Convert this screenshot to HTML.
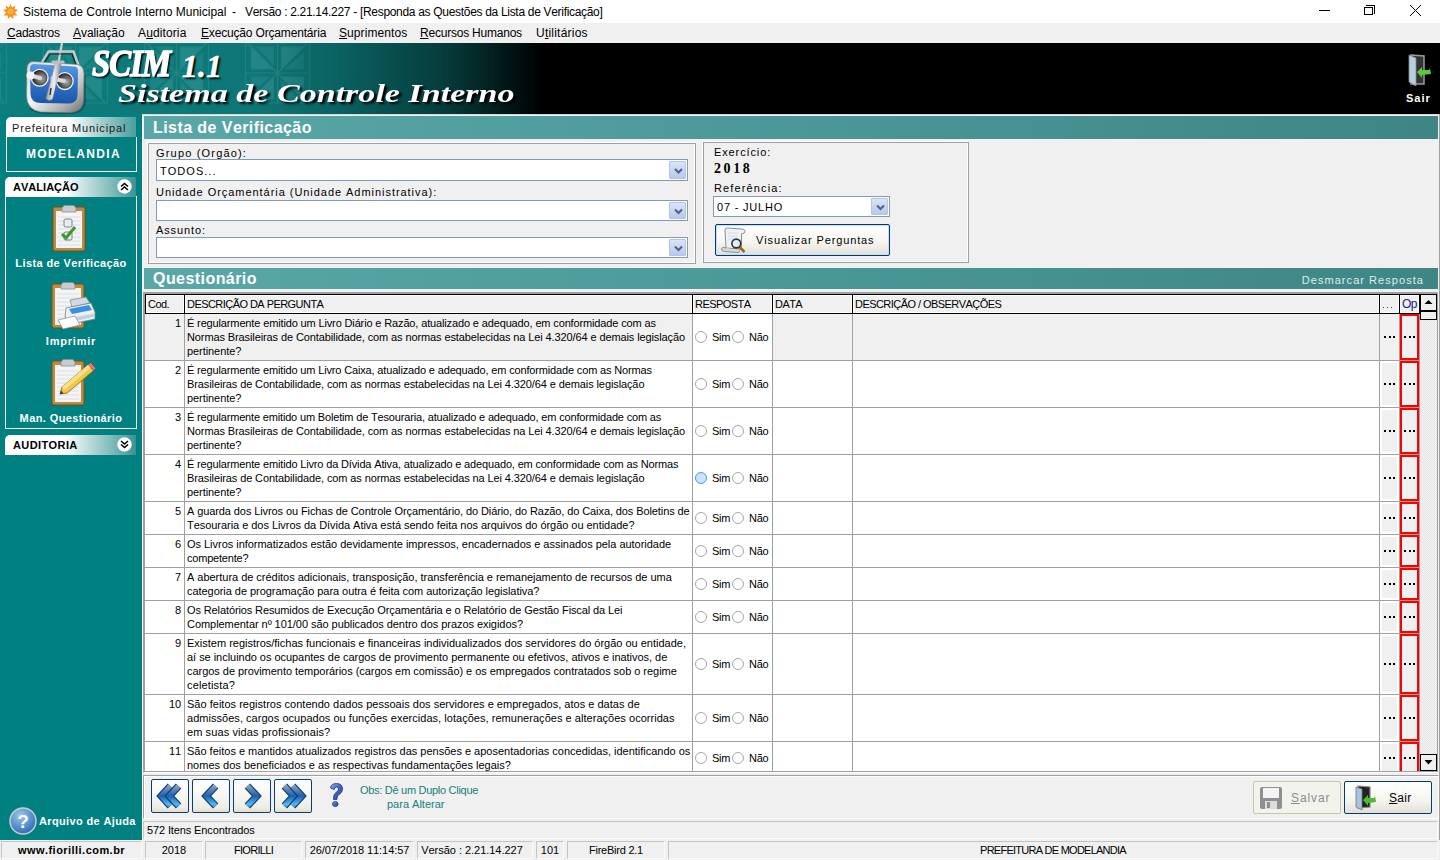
<!DOCTYPE html>
<html><head><meta charset="utf-8">
<style>
*{margin:0;padding:0;box-sizing:border-box}
html,body{width:1440px;height:860px;overflow:hidden;background:#f0f0f0;font-family:"Liberation Sans",sans-serif;color:#000;font-kerning:none}
.a{position:absolute}
#title{left:0;top:0;width:1440px;height:23px;background:#fff}
#menu{left:0;top:23px;width:1440px;height:20px;background:#f0f0f0;font-size:12px}
#banner{left:0;top:43px;width:1440px;height:71px;background:#000}
.bt{font-family:"Liberation Serif",serif;font-weight:bold;font-style:italic;color:#fff;white-space:nowrap;text-shadow:2px 2px 2px #000}
#side{left:0;top:114px;width:142px;height:726px;background:#008080}
#main{left:142px;top:114px;width:1298px;height:726px;background:#f0f0f0}
.hdr{background:linear-gradient(90deg,#5aa7a7 0%,#4a9898 50%,#3f8585 100%);color:#fff;font-weight:bold;font-size:16px}
.grid{font-size:11px}
.row{position:absolute;left:0;width:1293px;border-bottom:1px solid #a0a0a0;background:#fff}
.c{position:absolute;top:0;bottom:0;border-right:1px solid #a0a0a0}
.sb{position:absolute;top:841px;height:19px;border:1px solid #c8c8c8;border-right-color:#fff;border-bottom-color:#fff;font-size:12px;text-align:center;line-height:17px;background:#f0f0f0}
.mi{top:3px;font-size:12px;white-space:nowrap;letter-spacing:-0.22px}
.lbl{font-size:11px;font-weight:bold;color:#fff;text-align:center;white-space:nowrap;letter-spacing:0.3px}
.sbp{border:1px solid #c4c4c4;border-right-color:#fbfbfb;border-bottom-color:#fbfbfb;text-align:center;line-height:16px;background:#f0f0f0}
.gb{border:1px solid #a0a0a0;box-shadow:-1px -1px 0 #fff, inset -1px -1px 0 #fff}
.fl{font-size:11px;white-space:nowrap;letter-spacing:0.88px;color:#000}
.cb{background:#fff;border:1px solid #7f9db9;font-size:11px;letter-spacing:0.6px}
.dd{background:linear-gradient(#dbe5f8,#b8c8ec);border:1px solid #b2c4ea;border-radius:1px}
.btn{border:1px solid #003c74;border-radius:2px;box-shadow:inset 0 0 0 1px #c4dcf8;background:linear-gradient(#fff 0%,#f5f5f0 60%,#e0dfd5 100%)}
.hc{background:#f0f0f0;border:1px solid #fff;font-size:11px;line-height:16px;padding-left:1px;white-space:nowrap;overflow:hidden;letter-spacing:-0.55px}
.gt{font-size:11px;line-height:14px;white-space:nowrap;letter-spacing:-0.13px}
.sn{letter-spacing:-0.3px}
.rd{width:12px;height:12px;border-radius:50%;border:1px solid #a8a8a8;background:#fff}
.rdc{width:12px;height:12px;border-radius:50%;border:1px solid #3ca0f0;background:#cfe2fb}
.dots{width:11px;height:2px;background:repeating-linear-gradient(90deg,#000 0 2px,transparent 2px 4.5px)}
.sbb{border:1px solid #000;background:#f0f0f0}
.nb{border:1px solid #0a3c7a;border-radius:2px;background:linear-gradient(#fff 0%,#f8f8f4 40%,#efeee6 85%,#e2dccb 100%)}
.btn2{border:1px solid #cac4a6;border-radius:2px;background:#f3f3ee}
.tt{top:5px;font-size:12px;color:#000;white-space:pre}
</style></head><body>
<div id="title" class="a">
<svg class="a" style="left:3px;top:4px" width="15" height="15" viewBox="0 0 15 15"><g fill="#f7941d"><polygon points="7.5,0 9,3.5 12.5,1.5 11.5,5 15,6 12,8.5 14.5,11.5 10.5,11.5 10,15 7.5,12.5 5,15 4.5,11.5 0.5,11.5 3,8.5 0,6 3.5,5 2.5,1.5 6,3.5"/></g><circle cx="7.5" cy="7.5" r="3" fill="#fbb040"/></svg>
<div class="a tt" style="left:23px;letter-spacing:0px">Sistema de Controle Interno Municipal</div><div class="a tt" style="left:232px">-</div><div class="a tt" style="left:245px;letter-spacing:-0.31px">Versão : 2.21.14.227 - [Responda as Questões da Lista de Verificação]</div>
<div class="a" style="left:1319px;top:10px;width:11px;height:1px;background:#000"></div>
<div class="a" style="left:1366px;top:5px;width:9px;height:9px;border-top:1px solid #000;border-right:1px solid #000"></div>
<div class="a" style="left:1364px;top:7px;width:9px;height:8px;border:1px solid #000;background:#fff"></div>
<svg class="a" style="left:1409px;top:4px" width="13" height="13" viewBox="0 0 13 13"><path d="M1 1L12 12M12 1L1 12" stroke="#000" stroke-width="1"/></svg>
</div>
<div id="menu" class="a">
<span class="a mi" style="left:7px"><u>C</u>adastros</span>
<span class="a mi" style="left:73px;letter-spacing:-0.06px"><u>A</u>valiação</span>
<span class="a mi" style="left:138px;letter-spacing:0.12px">A<u>u</u>ditoria</span>
<span class="a mi" style="left:201px;letter-spacing:-0.17px"><u>E</u>xecução Orçamentária</span>
<span class="a mi" style="left:339px;letter-spacing:0.08px"><u>S</u>uprimentos</span>
<span class="a mi" style="left:420px"><u>R</u>ecursos Humanos</span>
<span class="a mi" style="left:536px;letter-spacing:0.22px">U<u>t</u>ilitários</span>
</div>
<div id="banner" class="a">
<svg class="a" style="left:0;top:0" width="560" height="71" viewBox="0 0 560 71">
<defs><linearGradient id="bg1" x1="0" x2="1" y1="0" y2="0"><stop offset="0" stop-color="#0d7d7d"/><stop offset="0.45" stop-color="#0e7676"/><stop offset="0.6" stop-color="#0b6262"/><stop offset="0.8" stop-color="#063a3a"/><stop offset="0.97" stop-color="#000"/></linearGradient>
<pattern id="pt" width="101" height="71" patternUnits="userSpaceOnUse" x="25" y="0">
<g transform="translate(50.5,30)" fill="#4aa5a5" stroke="#3d9c9c" stroke-width="1.2">
<g opacity="0.35">
<path d="M0 -30 L0 30 M-32 0 L32 0 M-30 -30 L30 30 M30 -30 L-30 30" fill="none"/>
<path d="M-32 -30 L32 -30 L32 30 L-32 30 Z" fill="none"/>
<path d="M4 -26 L26 -26 L4 -4 Z"/><path d="M26 4 L26 26 L4 4 Z"/><path d="M-4 26 L-26 26 L-4 4 Z"/><path d="M-26 -4 L-26 -26 L-4 -4 Z"/>
<path d="M-4 -26 L-4 -8 L-20 -26 Z" opacity="0.7"/><path d="M26 -4 L8 -4 L26 -20 Z" opacity="0.7"/><path d="M4 26 L4 8 L20 26 Z" opacity="0.7"/><path d="M-26 4 L-8 4 L-26 20 Z" opacity="0.7"/>
</g></g></pattern>
<linearGradient id="fade" x1="0" x2="1"><stop offset="0" stop-color="#fff"/><stop offset="0.5" stop-color="#fff"/><stop offset="0.64" stop-color="#000"/></linearGradient>
<mask id="mk"><rect width="560" height="71" fill="url(#fade)"/></mask>
</defs>
<rect width="560" height="71" fill="url(#bg1)"/>
<rect width="560" height="71" fill="url(#pt)" mask="url(#mk)"/>
</svg>
<!-- logo -->
<svg class="a" style="left:0;top:0" width="100" height="71" viewBox="0 0 100 71">
<defs>
<linearGradient id="lgb" x1="0" y1="0" x2="0" y2="1"><stop offset="0" stop-color="#5a9ae6"/><stop offset="0.5" stop-color="#2f72c8"/><stop offset="1" stop-color="#1b56a6"/></linearGradient>
<linearGradient id="lgf" x1="0" y1="0" x2="1" y2="1"><stop offset="0" stop-color="#d8d8d8"/><stop offset="0.45" stop-color="#f4f4f4"/><stop offset="0.8" stop-color="#a8a8a8"/><stop offset="1" stop-color="#6a6a6a"/></linearGradient>
<radialGradient id="lgj" cx="0.6" cy="0.55" r="0.55"><stop offset="0" stop-color="#b0b0b0"/><stop offset="0.5" stop-color="#6a6a6a"/><stop offset="1" stop-color="#202020"/></radialGradient>
<linearGradient id="lgs" x1="0" y1="0" x2="1" y2="0"><stop offset="0" stop-color="#9a9a9a"/><stop offset="0.5" stop-color="#f0f0f0"/><stop offset="1" stop-color="#8a8a8a"/></linearGradient>
</defs>
<path d="M62 0 L58.5 19" stroke="#d0d0d0" stroke-width="2.2"/>
<path d="M41.5 20 L48.5 8.5 L73.5 8.5 L78.5 22" fill="none" stroke="#c8c8c8" stroke-width="2.4"/>
<path d="M44 20 L50 11 L72 11 L76 22" fill="none" stroke="#1a1a1a" stroke-width="1.2" opacity="0.8"/>
<path d="M29 66 Q36 71 48 71 L72 71 Q85 70 86 58 L86 32 Z" fill="#000" opacity="0.25"/>
<path d="M33 18.5 Q27.5 19 27 25 L26.5 52 Q26.5 67 41 69 L70 69.5 Q83 69 83.5 57 L84 31 Q84 22.5 77 21.5 Z" fill="url(#lgf)" stroke="#7a7a7a" stroke-width="0.6"/>
<path d="M34 21 L75 23.5 Q78 24 78 28 L77.5 52 Q77 60.5 69 60.5 L41 60 Q31 60 30.5 51 L30 25.5 Q30 21 34 21 Z" fill="url(#lgb)"/>
<circle cx="39.7" cy="34.8" r="8.4" fill="url(#lgj)" stroke="#f2f2f2" stroke-width="1.3"/>
<circle cx="64.8" cy="38.1" r="8.4" fill="url(#lgj)" stroke="#f2f2f2" stroke-width="1.3"/>
<path d="M31 32.5 L40 35" stroke="#d8d8d8" stroke-width="4" stroke-linecap="round"/>
<path d="M55 36 L64 38" stroke="#d8d8d8" stroke-width="4" stroke-linecap="round"/>
<circle cx="30.5" cy="32.5" r="4" fill="#f4f4f4"/>
<circle cx="54.5" cy="36" r="4" fill="#f4f4f4"/>
<path d="M55.5 19.5 L61.5 19.5 L52.5 56 Q49 59 46 55.5 Z" fill="url(#lgs)" stroke="#888" stroke-width="0.5"/>
<rect x="51.5" y="17.5" width="13" height="3" rx="1" fill="#bdbdbd"/>
<path d="M51 45 L50 52" stroke="#333" stroke-width="1.5"/>
</svg>
<div class="a bt" style="left:92px;top:-2px;font-size:38px;letter-spacing:-1px;transform:scaleX(0.86);-webkit-text-stroke:1.4px #fff;transform-origin:0 0">SCIM</div>
<div class="a bt" style="left:182px;top:6px;font-size:31px;letter-spacing:0.5px;-webkit-text-stroke:0.6px #fff">1.1</div>
<div class="a bt" style="left:118px;top:36px;font-size:26px;letter-spacing:0px;transform-origin:0 0;transform:scaleX(1.31)" id="sist">Sistema de Controle Interno</div>
<svg class="a" style="left:1407px;top:11px" width="25" height="32" viewBox="0 0 25 32">
<path d="M4 1 L17 2 L17 30 L4 30Z" fill="#333" stroke="#999" stroke-width="1.5"/>
<path d="M2 1 L9 4 L9 32 L2 28Z" fill="#b8cde0" stroke="#888" stroke-width="0.8"/>
<path d="M10 18 L15 13 L15 16 L22 16 L23 14 L24 20 L15 21 L15 24Z" fill="#5cc83c"/>
</svg>
<div class="a" style="left:1406px;top:49px;font-size:11px;font-weight:bold;color:#fff;letter-spacing:1px">Sair</div>
</div>
<div id="side" class="a">
<div class="a" style="left:6px;top:3px;width:130px;height:20px;border-radius:5px 0 0 0;background:linear-gradient(90deg,#fff 0%,#fff 48%,#9fcaca 75%,#4a9e9e 100%)"></div>
<div class="a" style="left:12px;top:8px;font-size:11px;color:#1a1a1a;white-space:nowrap;letter-spacing:0.85px">Prefeitura Municipal</div>
<div class="a" style="left:6px;top:23px;width:131px;height:35px;border:1px solid #fff;border-top:none"></div>
<div class="a" style="left:8px;top:33px;width:131px;text-align:center;font-size:12px;font-weight:bold;color:#fff;letter-spacing:1.38px">MODELANDIA</div>
<div class="a" style="left:5px;top:63px;width:131px;height:20px;border-radius:5px 0 0 0;background:linear-gradient(90deg,#fff 0%,#fff 45%,#a8d0d0 70%,#5aa6a6 92%,#3a9090 100%)"></div>
<div class="a" style="left:13px;top:67px;font-size:11px;font-weight:bold;color:#000;letter-spacing:0.03px">AVALIAÇÃO</div>
<svg class="a" style="left:117px;top:65px" width="15" height="15" viewBox="0 0 15 15"><circle cx="7.5" cy="7.5" r="7.2" fill="#fff"/><path d="M4 7.5 L7.5 4.5 L11 7.5 M4 11 L7.5 8 L11 11" fill="none" stroke="#000" stroke-width="1.6"/></svg>
<div class="a" style="left:5px;top:82px;width:132px;height:233px;border:1px solid #fff;border-top:none"></div>
<svg class="a" style="left:50px;top:91px" width="38" height="48" viewBox="0 0 36 48"><path d="M2 4 Q2 2 4 2 L32 2 Q34 2 34 4 L34 44 Q34 46 32 46 L4 46 Q2 46 2 44Z" fill="#c08a40" stroke="#6e5020" stroke-width="1"/>
<rect x="5" y="6" width="26" height="37" fill="#f4f4f4"/>
<g stroke="#d6dbe6" stroke-width="0.8"><path d="M7 12H29M7 16H29M7 20H29M7 24H29M7 28H29M7 32H29M7 36H29M7 40H29"/></g>
<path d="M11 3 L13 0.5 L23 0.5 L25 3 L25 7 L11 7Z" fill="#c9cbcf" stroke="#8d9096" stroke-width="0.8"/>
<rect x="13" y="14" width="8" height="8" rx="1.5" fill="#e8ecf2" stroke="#666" stroke-width="0.8"/>
<rect x="13" y="27" width="8" height="8" rx="1.5" fill="#e8ecf2" stroke="#666" stroke-width="0.8"/>
<path d="M11 29 L15 33 L24 22" fill="none" stroke="#3a9a2a" stroke-width="3"/>
</svg>
<div class="a lbl" style="left:0;top:143px;width:142px;letter-spacing:0.4px">Lista de Verificação</div>
<svg class="a" style="left:50px;top:168px" width="46" height="50" viewBox="0 0 46 50"><path d="M2 4 Q2 2 4 2 L32 2 Q34 2 34 4 L34 44 Q34 46 32 46 L4 46 Q2 46 2 44Z" fill="#c08a40" stroke="#6e5020" stroke-width="1"/>
<rect x="5" y="6" width="26" height="37" fill="#f4f4f4"/>
<g stroke="#d6dbe6" stroke-width="0.8"><path d="M7 12H29M7 16H29M7 20H29M7 24H29M7 28H29M7 32H29M7 36H29M7 40H29"/></g>
<path d="M11 3 L13 0.5 L23 0.5 L25 3 L25 7 L11 7Z" fill="#c9cbcf" stroke="#8d9096" stroke-width="0.8"/>
<path d="M20 18 L36 15 L40 21 L22 25 Z" fill="#d4dae2" stroke="#7a828c" stroke-width="0.7"/>
<path d="M16 26 L41 21 L45 30 L45 37 L21 42 L15 35 Z" fill="#eef1f4" stroke="#7a828c" stroke-width="0.8"/>
<path d="M19 27 L39 23 L42 28 L22 32 Z" fill="#3b8fe0"/>
<path d="M21 36 L44 31.5 L44 35 L21 40 Z" fill="#c9d0d8"/>
<path d="M8 38 L25 34 L30 43 L13 47 Z" fill="#fff" stroke="#8a8a8a" stroke-width="0.7"/>
</svg>
<div class="a lbl" style="left:0;top:221px;width:142px;letter-spacing:0.8px">Imprimir</div>
<svg class="a" style="left:50px;top:245px" width="46" height="48" viewBox="0 0 46 48"><path d="M2 4 Q2 2 4 2 L32 2 Q34 2 34 4 L34 44 Q34 46 32 46 L4 46 Q2 46 2 44Z" fill="#c08a40" stroke="#6e5020" stroke-width="1"/>
<rect x="5" y="6" width="26" height="37" fill="#f4f4f4"/>
<g stroke="#d6dbe6" stroke-width="0.8"><path d="M7 12H29M7 16H29M7 20H29M7 24H29M7 28H29M7 32H29M7 36H29M7 40H29"/></g>
<path d="M11 3 L13 0.5 L23 0.5 L25 3 L25 7 L11 7Z" fill="#c9cbcf" stroke="#8d9096" stroke-width="0.8"/>
<path d="M10 35 L12 28.1 L38.4 5.5 L43.6 11.5 L17.2 34.1 Z" fill="#f2c744" stroke="#7a6418" stroke-width="0.8"/>
<path d="M12 28.1 L38.4 5.5 L41 8.5 L14.6 31.1 Z" fill="#f8e08a"/>
<path d="M38.4 5.5 L40.7 3.5 L45.9 9.5 L43.6 11.5 Z" fill="#e87a7a" stroke="#8a3a3a" stroke-width="0.6"/>
<path d="M10 35 L11 31.5 L13.6 34.5 Z" fill="#333"/>
</svg>
<div class="a lbl" style="left:0;top:298px;width:142px;letter-spacing:0.4px">Man. Questionário</div>
<div class="a" style="left:5px;top:321px;width:131px;height:20px;border-radius:5px 0 0 0;background:linear-gradient(90deg,#fff 0%,#fff 45%,#a8d0d0 70%,#5aa6a6 92%,#3a9090 100%)"></div>
<div class="a" style="left:13px;top:325px;font-size:11px;font-weight:bold;color:#000;letter-spacing:0.4px">AUDITORIA</div>
<svg class="a" style="left:117px;top:323px" width="15" height="15" viewBox="0 0 15 15"><circle cx="7.5" cy="7.5" r="7.2" fill="#fff"/><path d="M4 4 L7.5 7 L11 4 M4 7.5 L7.5 10.5 L11 7.5" fill="none" stroke="#000" stroke-width="1.6"/></svg>
<svg class="a" style="left:9px;top:693px" width="28" height="28" viewBox="0 0 28 28"><defs><radialGradient id="hg" cx="0.4" cy="0.3" r="0.8"><stop offset="0" stop-color="#9cc8f0"/><stop offset="1" stop-color="#1f5fb0"/></radialGradient></defs><circle cx="14" cy="14" r="13" fill="url(#hg)" stroke="#ccc" stroke-width="1.5"/><text x="14" y="21" text-anchor="middle" font-family="Liberation Sans" font-weight="bold" font-size="19" fill="#fff">?</text></svg>
<div class="a" style="left:39px;top:701px;font-size:11px;font-weight:bold;color:#fff;white-space:nowrap;letter-spacing:0.36px">Arquivo de Ajuda</div>
</div>
<div class="a" style="left:0;top:840px;width:142px;height:20px;background:#f0f0f0"></div>
<div class="a sbp" style="left:1px;top:841px;width:141px;height:18px;font-weight:bold;font-size:11px;letter-spacing:0.46px">www.fiorilli.com.br</div>

<div id="main" class="a">
<div class="a" style="left:0;top:0;width:1297px;height:726px;border-top:1px solid #d8d8d8;border-left:1px solid #fff"></div>
<div class="a hdr" style="left:2px;top:2px;width:1294px;height:23px"><span class="a" style="left:9px;top:3px;letter-spacing:0.43px">Lista de Verificação</span></div>
<div class="a gb" style="left:6px;top:29px;width:548px;height:121px"></div>
<div class="a fl" style="left:14px;top:33px;letter-spacing:1.18px">Grupo (Orgão):</div>
<div class="a cb" style="left:14px;top:45px;width:532px;height:22px"><span class="a" style="left:3px;top:5px;letter-spacing:1.03px">TODOS...</span><div class="a dd" style="right:1px;top:1px;width:17px;height:18px"><svg width="17" height="18" viewBox="0 0 17 18"><path d="M5 7.0 L8.5 10.5 L12 7.0" fill="none" stroke="#4d6185" stroke-width="2"/></svg></div></div>
<div class="a fl" style="left:14px;top:72px;letter-spacing:0.955px">Unidade Orçamentária (Unidade Administrativa):</div>
<div class="a cb" style="left:14px;top:86px;width:532px;height:21px"><span class="a" style="left:3px;top:3px"></span><div class="a dd" style="right:1px;top:1px;width:17px;height:17px"><svg width="17" height="17" viewBox="0 0 17 17"><path d="M5 6.5 L8.5 10.0 L12 6.5" fill="none" stroke="#4d6185" stroke-width="2"/></svg></div></div>
<div class="a fl" style="left:14px;top:110px">Assunto:</div>
<div class="a cb" style="left:14px;top:123px;width:532px;height:21px"><span class="a" style="left:3px;top:3px"></span><div class="a dd" style="right:1px;top:1px;width:17px;height:17px"><svg width="17" height="17" viewBox="0 0 17 17"><path d="M5 6.5 L8.5 10.0 L12 6.5" fill="none" stroke="#4d6185" stroke-width="2"/></svg></div></div>
<div class="a gb" style="left:561px;top:28px;width:266px;height:121px"></div>
<div class="a fl" style="left:572px;top:32px">Exercício:</div>
<div class="a" style="left:572px;top:47px;font-size:14px;font-weight:bold;font-family:'Liberation Serif',serif;letter-spacing:2.6px">2018</div>
<div class="a fl" style="left:572px;top:68px;letter-spacing:1.14px">Referência:</div>
<div class="a cb" style="left:571px;top:82px;width:177px;height:21px"><span class="a" style="left:3px;top:4px;letter-spacing:0.8px">07 - JULHO</span><div class="a dd" style="right:1px;top:1px;width:17px;height:17px"><svg width="17" height="17" viewBox="0 0 17 17"><path d="M5 6.5 L8.5 10.0 L12 6.5" fill="none" stroke="#4d6185" stroke-width="2"/></svg></div></div>
<div class="a btn" style="left:573px;top:110px;width:175px;height:32px"></div>
<svg class="a" style="left:578px;top:113px" width="27" height="27" viewBox="0 0 27 27">
<path d="M5 3 Q5 1 7.5 1 L22 2 Q25 2.3 25 4.5 Q25 6.5 22.5 6.5 L21.5 6.5 L21.5 20 Q21.5 22 19 22 L6 21 Z" fill="#edf2f7" stroke="#8e8e8e" stroke-width="1"/>
<path d="M6 21 Q2 19.5 1.5 21.5 Q1 24 5 24.5 L18 25.5 Q20 25.5 19.5 23.5" fill="#d8d8d8" stroke="#8e8e8e" stroke-width="1"/>
<g stroke="#c9d4e0" stroke-width="0.7"><path d="M8 6H18M8 9H18M8 12H14"/></g>
<path d="M19.5 20 L24.5 25" stroke="#9a6a10" stroke-width="2.6"/>
<circle cx="16.3" cy="16.5" r="4.4" fill="#e2ecf6" stroke="#333" stroke-width="1.6"/>
</svg>
<div class="a fl" style="left:614px;top:120px">Visualizar Perguntas</div>
<div class="a hdr" style="left:2px;top:154px;width:1294px;height:21px"><span class="a" style="left:9px;top:2px;letter-spacing:0.44px">Questionário</span><span class="a" style="right:14px;top:6px;font-size:11px;font-weight:normal;color:#dceeee;letter-spacing:1.05px">Desmarcar Resposta</span></div>
</div>
<!--GRID-->
<div class="a" style="left:143px;top:292px;width:1295px;height:481px;border:1px solid #a0a0a0;border-right-color:#fff;border-bottom-color:#fff;background:#fff"></div>
<div class="a" style="left:144px;top:293px;width:1294px;height:479px;border-top:1px solid #a0a0a0;border-left:1px solid #a0a0a0;border-right:1px solid #a0a0a0;border-bottom:1px solid #a0a0a0"></div>
<div class="a" style="left:145px;top:294px;width:1292px;height:477px;overflow:hidden" id="gridin">
<div class="a" style="left:0;top:0;width:1275px;height:20px;background:#000"></div>
<div class="a hc" style="left:1px;top:1px;width:38px;height:18px;">Cod.</div>
<div class="a hc" style="left:40px;top:1px;width:507px;height:18px;">DESCRIÇÃO DA PERGUNTA</div>
<div class="a hc" style="left:548px;top:1px;width:79px;height:18px;">RESPOSTA</div>
<div class="a hc" style="left:628px;top:1px;width:79px;height:18px;">DATA</div>
<div class="a hc" style="left:708px;top:1px;width:526px;height:18px;">DESCRIÇÃO / OBSERVAÇÕES</div>
<div class="a hc" style="left:1235px;top:1px;width:19px;height:18px;"></div>
<div class="a hc" style="left:1255px;top:1px;width:19px;height:18px;color:#1a237e;font-size:12px;">Op</div>
<div class="a" style="left:1238px;top:13px;width:9px;height:1px;background:repeating-linear-gradient(90deg,#55308a 0 1px,transparent 1px 4px)"></div>
<div class="a" style="left:0;top:20px;width:1275px;height:47px;background:#a0a0a0"></div>
<div class="a" style="left:0px;top:20px;width:39px;height:46px;background:#f0f0f0"></div>
<div class="a" style="left:40px;top:20px;width:507px;height:46px;background:#f0f0f0"></div>
<div class="a" style="left:548px;top:20px;width:79px;height:46px;background:#fff"></div>
<div class="a" style="left:628px;top:20px;width:79px;height:46px;background:#f0f0f0"></div>
<div class="a" style="left:708px;top:20px;width:526px;height:46px;background:#f0f0f0"></div>
<div class="a" style="left:1235px;top:20px;width:19px;height:46px;background:#f0f0f0"></div>
<div class="a" style="left:1255px;top:20px;width:19px;height:46px;background:#f0f0f0"></div>
<div class="a gt" style="left:1px;top:22px;width:35px;text-align:right">1</div>
<div class="a gt" style="left:42px;top:22px;letter-spacing:-0.140px">É regularmente emitido um Livro Diário e Razão, atualizado e adequado, em conformidade com as</div>
<div class="a gt" style="left:42px;top:36px;letter-spacing:-0.107px">Normas Brasileiras de Contabilidade, com as normas estabelecidas na Lei 4.320/64 e demais legislação</div>
<div class="a gt" style="left:42px;top:50px;letter-spacing:-0.070px">pertinente?</div>
<div class="a rd" style="left:550px;top:37.0px"></div>
<div class="a gt sn" style="left:567px;top:36px">Sim</div>
<div class="a rd" style="left:587px;top:37.0px"></div>
<div class="a gt sn" style="left:604px;top:36px">Não</div>
<div class="a" style="left:1235px;top:20px;width:19px;height:46px;background:#f0f0f0"></div>
<div class="a dots" style="left:1239px;top:42px"></div>
<div class="a" style="left:1255px;top:20px;width:19px;height:46px;background:#f0f0f0;border:2px solid #f00"></div>
<div class="a dots" style="left:1259px;top:42px"></div>
<div class="a" style="left:0;top:67px;width:1275px;height:47px;background:#a0a0a0"></div>
<div class="a" style="left:0px;top:67px;width:39px;height:46px;background:#fff"></div>
<div class="a" style="left:40px;top:67px;width:507px;height:46px;background:#fff"></div>
<div class="a" style="left:548px;top:67px;width:79px;height:46px;background:#fff"></div>
<div class="a" style="left:628px;top:67px;width:79px;height:46px;background:#fff"></div>
<div class="a" style="left:708px;top:67px;width:526px;height:46px;background:#fff"></div>
<div class="a" style="left:1235px;top:67px;width:19px;height:46px;background:#fff"></div>
<div class="a" style="left:1255px;top:67px;width:19px;height:46px;background:#fff"></div>
<div class="a gt" style="left:1px;top:69px;width:35px;text-align:right">2</div>
<div class="a gt" style="left:42px;top:69px;letter-spacing:-0.152px">É regularmente emitido um Livro Caixa, atualizado e adequado, em conformidade com as Normas</div>
<div class="a gt" style="left:42px;top:83px;letter-spacing:-0.105px">Brasileiras de Contabilidade, com as normas estabelecidas na Lei 4.320/64 e demais legislação</div>
<div class="a gt" style="left:42px;top:97px;letter-spacing:-0.070px">pertinente?</div>
<div class="a rd" style="left:550px;top:84.0px"></div>
<div class="a gt sn" style="left:567px;top:83px">Sim</div>
<div class="a rd" style="left:587px;top:84.0px"></div>
<div class="a gt sn" style="left:604px;top:83px">Não</div>
<div class="a" style="left:1237px;top:69px;width:15px;height:42px;background:#f0f0f0"></div>
<div class="a dots" style="left:1239px;top:89px"></div>
<div class="a" style="left:1255px;top:67px;width:19px;height:46px;background:#f0f0f0;border:2px solid #f00"></div>
<div class="a dots" style="left:1259px;top:89px"></div>
<div class="a" style="left:0;top:114px;width:1275px;height:47px;background:#a0a0a0"></div>
<div class="a" style="left:0px;top:114px;width:39px;height:46px;background:#fff"></div>
<div class="a" style="left:40px;top:114px;width:507px;height:46px;background:#fff"></div>
<div class="a" style="left:548px;top:114px;width:79px;height:46px;background:#fff"></div>
<div class="a" style="left:628px;top:114px;width:79px;height:46px;background:#fff"></div>
<div class="a" style="left:708px;top:114px;width:526px;height:46px;background:#fff"></div>
<div class="a" style="left:1235px;top:114px;width:19px;height:46px;background:#fff"></div>
<div class="a" style="left:1255px;top:114px;width:19px;height:46px;background:#fff"></div>
<div class="a gt" style="left:1px;top:116px;width:35px;text-align:right">3</div>
<div class="a gt" style="left:42px;top:116px;letter-spacing:-0.166px">É regularmente emitido um Boletim de Tesouraria, atualizado e adequado, em conformidade com as</div>
<div class="a gt" style="left:42px;top:130px;letter-spacing:-0.107px">Normas Brasileiras de Contabilidade, com as normas estabelecidas na Lei 4.320/64 e demais legislação</div>
<div class="a gt" style="left:42px;top:144px;letter-spacing:-0.070px">pertinente?</div>
<div class="a rd" style="left:550px;top:131.0px"></div>
<div class="a gt sn" style="left:567px;top:130px">Sim</div>
<div class="a rd" style="left:587px;top:131.0px"></div>
<div class="a gt sn" style="left:604px;top:130px">Não</div>
<div class="a" style="left:1237px;top:116px;width:15px;height:42px;background:#f0f0f0"></div>
<div class="a dots" style="left:1239px;top:136px"></div>
<div class="a" style="left:1255px;top:114px;width:19px;height:46px;background:#f0f0f0;border:2px solid #f00"></div>
<div class="a dots" style="left:1259px;top:136px"></div>
<div class="a" style="left:0;top:161px;width:1275px;height:47px;background:#a0a0a0"></div>
<div class="a" style="left:0px;top:161px;width:39px;height:46px;background:#fff"></div>
<div class="a" style="left:40px;top:161px;width:507px;height:46px;background:#fff"></div>
<div class="a" style="left:548px;top:161px;width:79px;height:46px;background:#fff"></div>
<div class="a" style="left:628px;top:161px;width:79px;height:46px;background:#fff"></div>
<div class="a" style="left:708px;top:161px;width:526px;height:46px;background:#fff"></div>
<div class="a" style="left:1235px;top:161px;width:19px;height:46px;background:#fff"></div>
<div class="a" style="left:1255px;top:161px;width:19px;height:46px;background:#fff"></div>
<div class="a gt" style="left:1px;top:163px;width:35px;text-align:right">4</div>
<div class="a gt" style="left:42px;top:163px;letter-spacing:-0.153px">É regularmente emitido Livro da Dívida Ativa, atualizado e adequado, em conformidade com as Normas</div>
<div class="a gt" style="left:42px;top:177px;letter-spacing:-0.105px">Brasileiras de Contabilidade, com as normas estabelecidas na Lei 4.320/64 e demais legislação</div>
<div class="a gt" style="left:42px;top:191px;letter-spacing:-0.070px">pertinente?</div>
<div class="a rdc" style="left:550px;top:178.0px"></div>
<div class="a gt sn" style="left:567px;top:177px">Sim</div>
<div class="a rd" style="left:587px;top:178.0px"></div>
<div class="a gt sn" style="left:604px;top:177px">Não</div>
<div class="a" style="left:1237px;top:163px;width:15px;height:42px;background:#f0f0f0"></div>
<div class="a dots" style="left:1239px;top:183px"></div>
<div class="a" style="left:1255px;top:161px;width:19px;height:46px;background:#f0f0f0;border:2px solid #f00"></div>
<div class="a dots" style="left:1259px;top:183px"></div>
<div class="a" style="left:0;top:208px;width:1275px;height:33px;background:#a0a0a0"></div>
<div class="a" style="left:0px;top:208px;width:39px;height:32px;background:#fff"></div>
<div class="a" style="left:40px;top:208px;width:507px;height:32px;background:#fff"></div>
<div class="a" style="left:548px;top:208px;width:79px;height:32px;background:#fff"></div>
<div class="a" style="left:628px;top:208px;width:79px;height:32px;background:#fff"></div>
<div class="a" style="left:708px;top:208px;width:526px;height:32px;background:#fff"></div>
<div class="a" style="left:1235px;top:208px;width:19px;height:32px;background:#fff"></div>
<div class="a" style="left:1255px;top:208px;width:19px;height:32px;background:#fff"></div>
<div class="a gt" style="left:1px;top:210px;width:35px;text-align:right">5</div>
<div class="a gt" style="left:42px;top:210px;letter-spacing:-0.096px">A guarda dos Livros ou Fichas de Controle Orçamentário, do Diário, do Razão, do Caixa, dos Boletins de</div>
<div class="a gt" style="left:42px;top:224px;letter-spacing:-0.042px">Tesouraria e dos Livros da Dívida Ativa está sendo feita nos arquivos do órgão ou entidade?</div>
<div class="a rd" style="left:550px;top:218.0px"></div>
<div class="a gt sn" style="left:567px;top:217px">Sim</div>
<div class="a rd" style="left:587px;top:218.0px"></div>
<div class="a gt sn" style="left:604px;top:217px">Não</div>
<div class="a" style="left:1237px;top:210px;width:15px;height:28px;background:#f0f0f0"></div>
<div class="a dots" style="left:1239px;top:223px"></div>
<div class="a" style="left:1255px;top:208px;width:19px;height:32px;background:#f0f0f0;border:2px solid #f00"></div>
<div class="a dots" style="left:1259px;top:223px"></div>
<div class="a" style="left:0;top:241px;width:1275px;height:33px;background:#a0a0a0"></div>
<div class="a" style="left:0px;top:241px;width:39px;height:32px;background:#fff"></div>
<div class="a" style="left:40px;top:241px;width:507px;height:32px;background:#fff"></div>
<div class="a" style="left:548px;top:241px;width:79px;height:32px;background:#fff"></div>
<div class="a" style="left:628px;top:241px;width:79px;height:32px;background:#fff"></div>
<div class="a" style="left:708px;top:241px;width:526px;height:32px;background:#fff"></div>
<div class="a" style="left:1235px;top:241px;width:19px;height:32px;background:#fff"></div>
<div class="a" style="left:1255px;top:241px;width:19px;height:32px;background:#fff"></div>
<div class="a gt" style="left:1px;top:243px;width:35px;text-align:right">6</div>
<div class="a gt" style="left:42px;top:243px;letter-spacing:-0.028px">Os Livros informatizados estão devidamente impressos, encadernados e assinados pela autoridade</div>
<div class="a gt" style="left:42px;top:257px;letter-spacing:-0.200px">competente?</div>
<div class="a rd" style="left:550px;top:251.0px"></div>
<div class="a gt sn" style="left:567px;top:250px">Sim</div>
<div class="a rd" style="left:587px;top:251.0px"></div>
<div class="a gt sn" style="left:604px;top:250px">Não</div>
<div class="a" style="left:1237px;top:243px;width:15px;height:28px;background:#f0f0f0"></div>
<div class="a dots" style="left:1239px;top:256px"></div>
<div class="a" style="left:1255px;top:241px;width:19px;height:32px;background:#f0f0f0;border:2px solid #f00"></div>
<div class="a dots" style="left:1259px;top:256px"></div>
<div class="a" style="left:0;top:274px;width:1275px;height:33px;background:#a0a0a0"></div>
<div class="a" style="left:0px;top:274px;width:39px;height:32px;background:#fff"></div>
<div class="a" style="left:40px;top:274px;width:507px;height:32px;background:#fff"></div>
<div class="a" style="left:548px;top:274px;width:79px;height:32px;background:#fff"></div>
<div class="a" style="left:628px;top:274px;width:79px;height:32px;background:#fff"></div>
<div class="a" style="left:708px;top:274px;width:526px;height:32px;background:#fff"></div>
<div class="a" style="left:1235px;top:274px;width:19px;height:32px;background:#fff"></div>
<div class="a" style="left:1255px;top:274px;width:19px;height:32px;background:#fff"></div>
<div class="a gt" style="left:1px;top:276px;width:35px;text-align:right">7</div>
<div class="a gt" style="left:42px;top:276px;letter-spacing:-0.026px">A abertura de créditos adicionais, transposição, transferência e remanejamento de recursos de uma</div>
<div class="a gt" style="left:42px;top:290px;letter-spacing:-0.048px">categoria de programação para outra é feita com autorização legislativa?</div>
<div class="a rd" style="left:550px;top:284.0px"></div>
<div class="a gt sn" style="left:567px;top:283px">Sim</div>
<div class="a rd" style="left:587px;top:284.0px"></div>
<div class="a gt sn" style="left:604px;top:283px">Não</div>
<div class="a" style="left:1237px;top:276px;width:15px;height:28px;background:#f0f0f0"></div>
<div class="a dots" style="left:1239px;top:289px"></div>
<div class="a" style="left:1255px;top:274px;width:19px;height:32px;background:#f0f0f0;border:2px solid #f00"></div>
<div class="a dots" style="left:1259px;top:289px"></div>
<div class="a" style="left:0;top:307px;width:1275px;height:33px;background:#a0a0a0"></div>
<div class="a" style="left:0px;top:307px;width:39px;height:32px;background:#fff"></div>
<div class="a" style="left:40px;top:307px;width:507px;height:32px;background:#fff"></div>
<div class="a" style="left:548px;top:307px;width:79px;height:32px;background:#fff"></div>
<div class="a" style="left:628px;top:307px;width:79px;height:32px;background:#fff"></div>
<div class="a" style="left:708px;top:307px;width:526px;height:32px;background:#fff"></div>
<div class="a" style="left:1235px;top:307px;width:19px;height:32px;background:#fff"></div>
<div class="a" style="left:1255px;top:307px;width:19px;height:32px;background:#fff"></div>
<div class="a gt" style="left:1px;top:309px;width:35px;text-align:right">8</div>
<div class="a gt" style="left:42px;top:309px;letter-spacing:-0.114px">Os Relatórios Resumidos de Execução Orçamentária e o Relatório de Gestão Fiscal da Lei</div>
<div class="a gt" style="left:42px;top:323px;letter-spacing:-0.048px">Complementar nº 101/00 são publicados dentro dos prazos exigidos?</div>
<div class="a rd" style="left:550px;top:317.0px"></div>
<div class="a gt sn" style="left:567px;top:316px">Sim</div>
<div class="a rd" style="left:587px;top:317.0px"></div>
<div class="a gt sn" style="left:604px;top:316px">Não</div>
<div class="a" style="left:1237px;top:309px;width:15px;height:28px;background:#f0f0f0"></div>
<div class="a dots" style="left:1239px;top:322px"></div>
<div class="a" style="left:1255px;top:307px;width:19px;height:32px;background:#f0f0f0;border:2px solid #f00"></div>
<div class="a dots" style="left:1259px;top:322px"></div>
<div class="a" style="left:0;top:340px;width:1275px;height:61px;background:#a0a0a0"></div>
<div class="a" style="left:0px;top:340px;width:39px;height:60px;background:#fff"></div>
<div class="a" style="left:40px;top:340px;width:507px;height:60px;background:#fff"></div>
<div class="a" style="left:548px;top:340px;width:79px;height:60px;background:#fff"></div>
<div class="a" style="left:628px;top:340px;width:79px;height:60px;background:#fff"></div>
<div class="a" style="left:708px;top:340px;width:526px;height:60px;background:#fff"></div>
<div class="a" style="left:1235px;top:340px;width:19px;height:60px;background:#fff"></div>
<div class="a" style="left:1255px;top:340px;width:19px;height:60px;background:#fff"></div>
<div class="a gt" style="left:1px;top:342px;width:35px;text-align:right">9</div>
<div class="a gt" style="left:42px;top:342px;letter-spacing:-0.006px">Existem registros/fichas funcionais e financeiras individualizados dos servidores do órgão ou entidade,</div>
<div class="a gt" style="left:42px;top:356px;letter-spacing:-0.035px">aí se incluindo os ocupantes de cargos de provimento permanente ou efetivos, ativos e inativos, de</div>
<div class="a gt" style="left:42px;top:370px;letter-spacing:-0.039px">cargos de provimento temporários (cargos em comissão) e os empregados contratados sob o regime</div>
<div class="a gt" style="left:42px;top:384px;letter-spacing:0.144px">celetista?</div>
<div class="a rd" style="left:550px;top:364.0px"></div>
<div class="a gt sn" style="left:567px;top:363px">Sim</div>
<div class="a rd" style="left:587px;top:364.0px"></div>
<div class="a gt sn" style="left:604px;top:363px">Não</div>
<div class="a" style="left:1237px;top:342px;width:15px;height:56px;background:#f0f0f0"></div>
<div class="a dots" style="left:1239px;top:369px"></div>
<div class="a" style="left:1255px;top:340px;width:19px;height:60px;background:#f0f0f0;border:2px solid #f00"></div>
<div class="a dots" style="left:1259px;top:369px"></div>
<div class="a" style="left:0;top:401px;width:1275px;height:47px;background:#a0a0a0"></div>
<div class="a" style="left:0px;top:401px;width:39px;height:46px;background:#fff"></div>
<div class="a" style="left:40px;top:401px;width:507px;height:46px;background:#fff"></div>
<div class="a" style="left:548px;top:401px;width:79px;height:46px;background:#fff"></div>
<div class="a" style="left:628px;top:401px;width:79px;height:46px;background:#fff"></div>
<div class="a" style="left:708px;top:401px;width:526px;height:46px;background:#fff"></div>
<div class="a" style="left:1235px;top:401px;width:19px;height:46px;background:#fff"></div>
<div class="a" style="left:1255px;top:401px;width:19px;height:46px;background:#fff"></div>
<div class="a gt" style="left:1px;top:403px;width:35px;text-align:right">10</div>
<div class="a gt" style="left:42px;top:403px;letter-spacing:0.017px">São feitos registros contendo dados pessoais dos servidores e empregados, atos e datas de</div>
<div class="a gt" style="left:42px;top:417px;letter-spacing:0.035px">admissões, cargos ocupados ou funções exercidas, lotações, remunerações e alterações ocorridas</div>
<div class="a gt" style="left:42px;top:431px;letter-spacing:0.096px">em suas vidas profissionais?</div>
<div class="a rd" style="left:550px;top:418.0px"></div>
<div class="a gt sn" style="left:567px;top:417px">Sim</div>
<div class="a rd" style="left:587px;top:418.0px"></div>
<div class="a gt sn" style="left:604px;top:417px">Não</div>
<div class="a" style="left:1237px;top:403px;width:15px;height:42px;background:#f0f0f0"></div>
<div class="a dots" style="left:1239px;top:423px"></div>
<div class="a" style="left:1255px;top:401px;width:19px;height:46px;background:#f0f0f0;border:2px solid #f00"></div>
<div class="a dots" style="left:1259px;top:423px"></div>
<div class="a" style="left:0;top:448px;width:1275px;height:33px;background:#a0a0a0"></div>
<div class="a" style="left:0px;top:448px;width:39px;height:32px;background:#fff"></div>
<div class="a" style="left:40px;top:448px;width:507px;height:32px;background:#fff"></div>
<div class="a" style="left:548px;top:448px;width:79px;height:32px;background:#fff"></div>
<div class="a" style="left:628px;top:448px;width:79px;height:32px;background:#fff"></div>
<div class="a" style="left:708px;top:448px;width:526px;height:32px;background:#fff"></div>
<div class="a" style="left:1235px;top:448px;width:19px;height:32px;background:#fff"></div>
<div class="a" style="left:1255px;top:448px;width:19px;height:32px;background:#fff"></div>
<div class="a gt" style="left:1px;top:450px;width:35px;text-align:right">11</div>
<div class="a gt" style="left:42px;top:450px;letter-spacing:-0.005px">São feitos e mantidos atualizados registros das pensões e aposentadorias concedidas, identificando os</div>
<div class="a gt" style="left:42px;top:464px;letter-spacing:0.007px">nomes dos beneficiados e as respectivas fundamentações legais?</div>
<div class="a rd" style="left:550px;top:458.0px"></div>
<div class="a gt sn" style="left:567px;top:457px">Sim</div>
<div class="a rd" style="left:587px;top:458.0px"></div>
<div class="a gt sn" style="left:604px;top:457px">Não</div>
<div class="a" style="left:1237px;top:450px;width:15px;height:28px;background:#f0f0f0"></div>
<div class="a dots" style="left:1239px;top:463px"></div>
<div class="a" style="left:1255px;top:448px;width:19px;height:32px;background:#f0f0f0;border:2px solid #f00"></div>
<div class="a dots" style="left:1259px;top:463px"></div>
<div class="a" style="left:1275px;top:0;width:17px;height:477px;background:repeating-conic-gradient(#f4f4f4 0 25%,#e4e4e4 0 50%) 0 0/2px 2px"></div>
<div class="a sbb" style="left:1275px;top:0;width:17px;height:17px"><svg width="15" height="15" viewBox="0 0 15 15" style="position:absolute;left:0;top:0"><path d="M3.5 9 L7.5 5 L11.5 9Z" fill="#000"/></svg></div>
<div class="a sbb" style="left:1275px;top:17px;width:17px;height:9px"></div>
<div class="a sbb" style="left:1275px;top:460px;width:17px;height:17px"><svg width="15" height="15" viewBox="0 0 15 15" style="position:absolute;left:0;top:0"><path d="M3.5 5 L7.5 9.5 L11.5 5Z" fill="#000"/></svg></div>
</div>
<!--/GRID-->
<!--BOTTOM-->
<div class="a" style="left:1439px;top:114px;width:1px;height:726px;background:#a0a0a0"></div>
<div class="a" style="left:143px;top:775px;width:1296px;height:44px;border:1px solid #a0a0a0;border-right-color:#fff;border-bottom-color:#fff;box-shadow:inset 1px 1px 0 #fff"></div>
<svg width="0" height="0" style="position:absolute"><defs><linearGradient id="chg" x1="0" y1="5" x2="0" y2="29" gradientUnits="userSpaceOnUse"><stop offset="0" stop-color="#9db0bc"/><stop offset="0.25" stop-color="#5a84b0"/><stop offset="0.5" stop-color="#1d5fae"/><stop offset="0.85" stop-color="#56b8ef"/><stop offset="1" stop-color="#2a7cc8"/></linearGradient></defs></svg><div class="a nb" style="left:151px;top:779px;width:38px;height:34px"><svg width="38" height="34" viewBox="0 0 38 34" style="position:absolute;left:-1px;top:-1px"><g fill="none" stroke-linejoin="miter" stroke-miterlimit="10"><path d="M19.4 7 L10.2 17 L19.4 27" stroke="#0d3f7e" stroke-width="7.4"/><path d="M19.4 7 L10.2 17 L19.4 27" stroke="url(#chg)" stroke-width="5"/><path d="M27.6 7 L18.4 17 L27.6 27" stroke="#0d3f7e" stroke-width="7.4"/><path d="M27.6 7 L18.4 17 L27.6 27" stroke="url(#chg)" stroke-width="5"/></g></svg></div><div class="a nb" style="left:192px;top:779px;width:38px;height:34px"><svg width="38" height="34" viewBox="0 0 38 34" style="position:absolute;left:-1px;top:-1px"><g fill="none" stroke-linejoin="miter" stroke-miterlimit="10"><path d="M23.6 7 L14.2 17 L23.6 27" stroke="#0d3f7e" stroke-width="7.4"/><path d="M23.6 7 L14.2 17 L23.6 27" stroke="url(#chg)" stroke-width="5"/></g></svg></div><div class="a nb" style="left:233px;top:779px;width:38px;height:34px"><svg width="38" height="34" viewBox="0 0 38 34" style="position:absolute;left:-1px;top:-1px"><g fill="none" stroke-linejoin="miter" stroke-miterlimit="10"><path d="M14.4 7 L23.8 17 L14.4 27" stroke="#0d3f7e" stroke-width="7.4"/><path d="M14.4 7 L23.8 17 L14.4 27" stroke="url(#chg)" stroke-width="5"/></g></svg></div><div class="a nb" style="left:274px;top:779px;width:38px;height:34px"><svg width="38" height="34" viewBox="0 0 38 34" style="position:absolute;left:-1px;top:-1px"><g fill="none" stroke-linejoin="miter" stroke-miterlimit="10"><path d="M10.4 7 L19.6 17 L10.4 27" stroke="#0d3f7e" stroke-width="7.4"/><path d="M10.4 7 L19.6 17 L10.4 27" stroke="url(#chg)" stroke-width="5"/><path d="M18.6 7 L27.8 17 L18.6 27" stroke="#0d3f7e" stroke-width="7.4"/><path d="M18.6 7 L27.8 17 L18.6 27" stroke="url(#chg)" stroke-width="5"/></g></svg></div><svg class="a" style="left:327px;top:781px" width="18" height="28" viewBox="0 0 18 28"><defs><linearGradient id="qg" x1="0" y1="0" x2="1" y2="1"><stop offset="0" stop-color="#8fb0f0"/><stop offset="0.5" stop-color="#3d63c0"/><stop offset="1" stop-color="#2a4aa0"/></linearGradient></defs><path d="M3.5 7 Q4 2.5 9.5 2.5 Q15.5 2.5 15.5 8 Q15.5 11.5 12 13.5 Q10 14.8 10 17.5 L10 18.5 L6.5 18.5 L6.5 17 Q6.5 13 9.5 11 Q11.5 9.5 11.5 8 Q11.5 6 9.5 6 Q7.5 6 7.2 8.5 Z" fill="url(#qg)" stroke="#1f3a8a" stroke-width="0.8"/><ellipse cx="8.3" cy="23" rx="2.8" ry="2.5" fill="url(#qg)" stroke="#1f3a8a" stroke-width="0.8"/></svg>
<div class="a" style="left:360px;top:784px;font-size:11px;color:#168080;white-space:nowrap;letter-spacing:-0.29px">Obs: Dê um Duplo Clique</div>
<div class="a" style="left:387px;top:798px;font-size:11px;color:#168080;white-space:nowrap;letter-spacing:0px">para Alterar</div>
<div class="a btn2" style="left:1253px;top:781px;width:88px;height:33px"></div>
<svg class="a" style="left:1259px;top:786px" width="24" height="24" viewBox="0 0 24 24"><rect x="1" y="1" width="22" height="22" rx="2" fill="#8f8f8f"/><rect x="4" y="2" width="16" height="10" fill="#f4f4f4"/><rect x="6" y="15" width="12" height="8" fill="#dcdcdc"/><rect x="8" y="16" width="3" height="6" fill="#8f8f8f"/></svg>
<div class="a" style="left:1291px;top:791px;font-size:12px;color:#8d8d8d;letter-spacing:0.9px"><u>S</u>alvar</div>
<div class="a btn" style="left:1344px;top:781px;width:88px;height:33px;box-shadow:none"></div>
<svg class="a" style="left:1353px;top:785px" width="24" height="26" viewBox="0 0 24 26"><path d="M5 1 L17 2 L17 22 L5 23Z" fill="#222" stroke="#888" stroke-width="1.2"/><path d="M3 2 L9 4 L9 25 L3 22Z" fill="#a8c4e0" stroke="#777" stroke-width="0.8"/><path d="M10 15 L15 10 L15 13 L21 13 L22 11 L23 17 L15 18 L15 21Z" fill="#4cbc30"/></svg>
<div class="a" style="left:1389px;top:791px;font-size:12px;color:#000;letter-spacing:0.3px"><u>S</u>air</div>
<div class="a sbp" style="left:143px;top:821px;width:1295px;height:18px;text-align:left;padding-left:3px;font-size:11px;letter-spacing:-0.12px">572 Itens Encontrados</div>
<div class="a sbp" style="left:145px;top:841px;width:58px;height:18px;font-size:11px">2018</div>
<div class="a sbp" style="left:205px;top:841px;width:97px;height:18px;font-size:11px;letter-spacing:-0.7px">FIORILLI</div>
<div class="a sbp" style="left:305px;top:841px;width:109px;height:18px;font-size:11px;letter-spacing:-0.07px">26/07/2018 11:14:57</div>
<div class="a sbp" style="left:417px;top:841px;width:116px;height:18px;font-size:11px;letter-spacing:-0.03px;padding-right:6px">Versão : 2.21.14.227</div>
<div class="a sbp" style="left:536px;top:841px;width:28px;height:18px;font-size:11px">101</div>
<div class="a sbp" style="left:567px;top:841px;width:98px;height:18px;font-size:11px;letter-spacing:-0.24px">FireBird 2.1</div>
<div class="a sbp" style="left:668px;top:841px;width:770px;height:18px;font-size:11px;letter-spacing:-0.75px">PREFEITURA DE MODELANDIA</div>
<!--/BOTTOM-->
</body></html>
